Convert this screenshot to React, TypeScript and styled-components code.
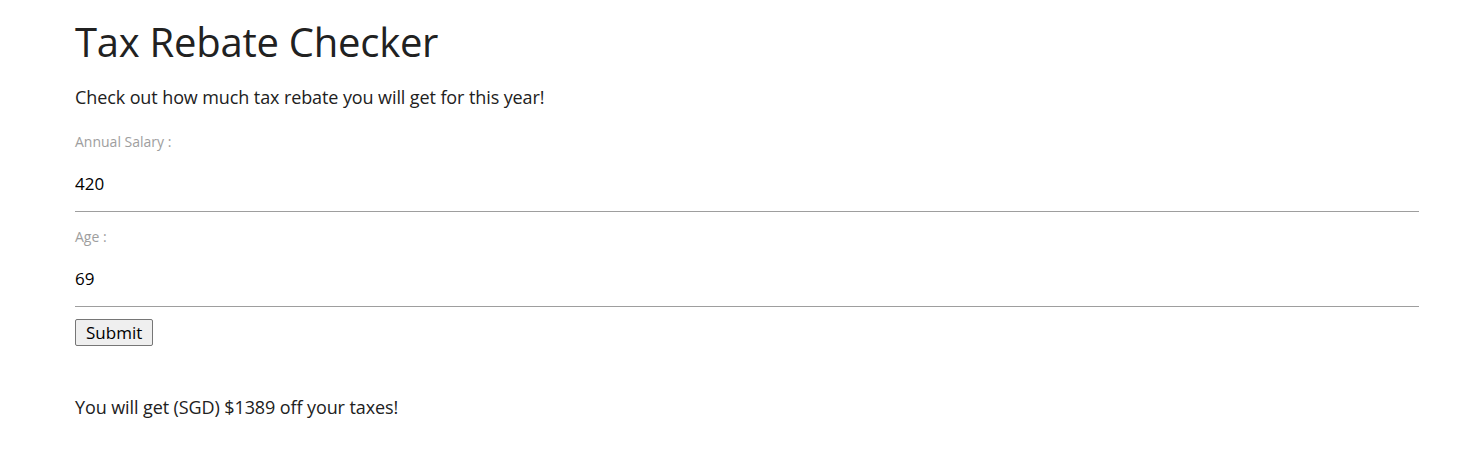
import React, { useState } from "react";
import styled, { createGlobalStyle } from "styled-components";

const Global = createGlobalStyle`
  html, body { margin: 0; padding: 0; background: #fff; }
  body { font-family: "Open Sans", "Noto Sans", sans-serif; color: #212121; }
`;

const Page = styled.main`
  padding: 14px 61px 0 75px;
  display: flex;
  flex-direction: column;
`;

const Title = styled.h1`
  margin: 0;
  font-weight: 400;
  font-size: 40px;
  line-height: 56px;
  color: #212121;
  letter-spacing: -0.25px;
`;

const Lead = styled.p`
  margin: 15px 0 0;
  font-size: 18px;
  line-height: 24px;
  color: #212121;
  letter-spacing: -0.1px;
`;

const Field = styled.label<{ $first?: boolean }>`
  display: flex;
  flex-direction: column;
  margin-top: ${(p) => (p.$first ? "24px" : "16px")};
`;

const FieldLabel = styled.span`
  font-size: 14px;
  line-height: 18px;
  color: #9e9e9e;
`;

const Input = styled.input`
  box-sizing: border-box;
  border: none;
  border-bottom: 1px solid #9e9e9e;
  outline: none;
  background: transparent;
  height: 52px;
  padding: 0 0 4px;
  margin-top: 9px;
  font-family: inherit;
  font-size: 17px;
  color: #000;
`;

const Button = styled.button`
  align-self: flex-start;
  margin-top: 12px;
  height: 27px;
  padding: 0 10px;
  font-family: inherit;
  font-size: 17px;
  color: #000;
  background: #efefef;
  border: 1px solid #767676;
  border-radius: 2px;
`;

const Result = styled.p`
  margin: 49px 0 0;
  font-size: 18px;
  line-height: 24px;
  color: #212121;
  letter-spacing: -0.1px;
`;

export default function App() {
  const [salary, setSalary] = useState("420");
  const [age, setAge] = useState("69");
  return (
    <>
      <Global />
      <Page>
        <Title>Tax Rebate Checker</Title>
        <Lead>Check out how much tax rebate you will get for this year!</Lead>
        <Field $first>
          <FieldLabel>Annual Salary :</FieldLabel>
          <Input value={salary} onChange={(e) => setSalary(e.target.value)} />
        </Field>
        <Field>
          <FieldLabel>Age :</FieldLabel>
          <Input value={age} onChange={(e) => setAge(e.target.value)} />
        </Field>
        <Button type="button">Submit</Button>
        <Result>You will get (SGD) $1389 off your taxes!</Result>
      </Page>
    </>
  );
}
